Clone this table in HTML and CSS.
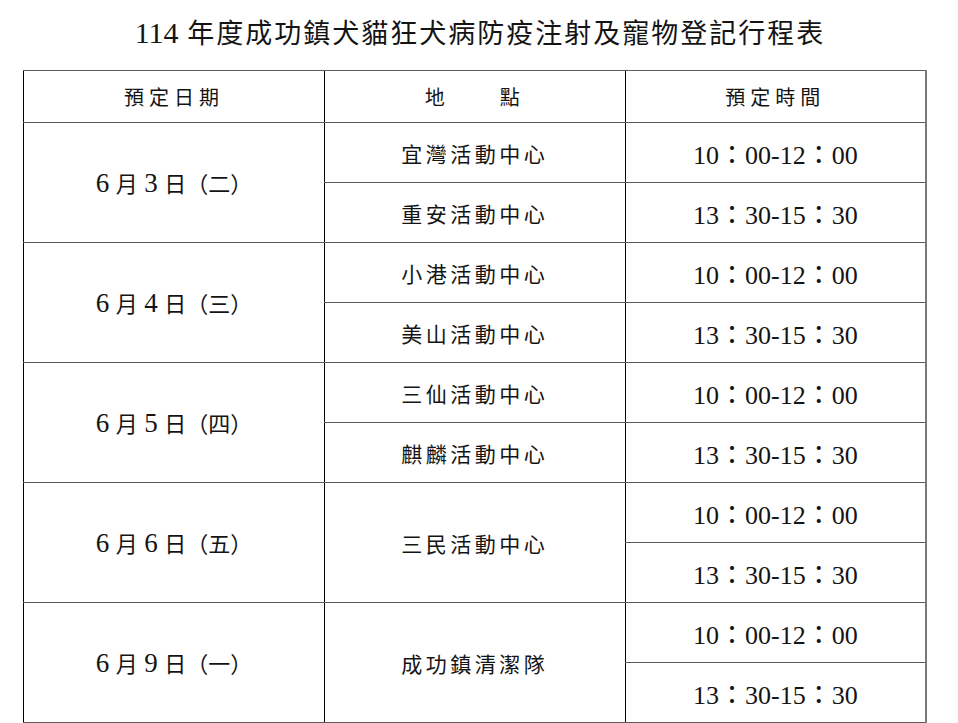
FILE: index.html
```html
<!DOCTYPE html>
<html lang="zh-Hant">
<head>
<meta charset="utf-8">
<title>114 年度成功鎮犬貓狂犬病防疫注射及寵物登記行程表</title>
<link rel="stylesheet" href="styles.css">
</head>
<body>
<h1 class="title"><span class="title-num">114</span> 年度成功鎮犬貓狂犬病防疫注射及寵物登記行程表</h1>
<table class="schedule">
  <thead>
    <tr>
      <th class="head">預定日期</th>
      <th class="head">地　　點</th>
      <th class="head">預定時間</th>
    </tr>
  </thead>
  <tbody>
    <tr>
      <td class="date" rowspan="2"><span class="n">6</span> 月 <span class="n">3</span> 日（二）</td>
      <td class="place">宜灣活動中心</td>
      <td class="time">10：00-12：00</td>
    </tr>
    <tr>
      <td class="place">重安活動中心</td>
      <td class="time">13：30-15：30</td>
    </tr>
    <tr>
      <td class="date" rowspan="2"><span class="n">6</span> 月 <span class="n">4</span> 日（三）</td>
      <td class="place">小港活動中心</td>
      <td class="time">10：00-12：00</td>
    </tr>
    <tr>
      <td class="place">美山活動中心</td>
      <td class="time">13：30-15：30</td>
    </tr>
    <tr>
      <td class="date" rowspan="2"><span class="n">6</span> 月 <span class="n">5</span> 日（四）</td>
      <td class="place">三仙活動中心</td>
      <td class="time">10：00-12：00</td>
    </tr>
    <tr>
      <td class="place">麒麟活動中心</td>
      <td class="time">13：30-15：30</td>
    </tr>
    <tr>
      <td class="date" rowspan="2"><span class="n">6</span> 月 <span class="n">6</span> 日（五）</td>
      <td class="place" rowspan="2">三民活動中心</td>
      <td class="time">10：00-12：00</td>
    </tr>
    <tr>
      <td class="time">13：30-15：30</td>
    </tr>
    <tr>
      <td class="date" rowspan="2"><span class="n">6</span> 月 <span class="n">9</span> 日（一）</td>
      <td class="place" rowspan="2">成功鎮清潔隊</td>
      <td class="time">10：00-12：00</td>
    </tr>
    <tr>
      <td class="time">13：30-15：30</td>
    </tr>
  </tbody>
</table>
</body>
</html>
```
FILE: styles.css
```css
html, body {
  margin: 0;
  padding: 0;
  background: #ffffff;
}

body {
  font-family: "Liberation Serif", "Noto Sans CJK TC", serif;
  color: #141414;
}

.title {
  margin: 0;
  padding-top: 14px;
  height: 38px;
  line-height: 38px;
  margin-bottom: 18px;
  text-align: center;
  font-weight: normal;
  font-size: 27px;
  letter-spacing: 2px;
  padding-left: 2px;
}

.title-num {
  font-size: 30px;
  letter-spacing: 0;
}

.schedule {
  margin-left: 23px;
  width: 904px;
  border-collapse: collapse;
  table-layout: fixed;
  border-top: 1px solid #000;
  border-left: 1px solid #000;
  border-right: 2px solid #7a7a7a;
}

.schedule th,
.schedule td {
  padding: 0;
  text-align: center;
  vertical-align: middle;
  border-left: 1px solid #000;
  border-top: 1px solid #5c5c5c;
  border-bottom: 1px solid #5c5c5c;
  font-weight: normal;
}

.head {
  height: 51px;
  font-size: 20px;
  letter-spacing: 5px;
  padding-left: 5px;
}

.schedule td {
  height: 59px;
}

.date {
  font-size: 22px;
  word-spacing: 1px;
  padding-left: 21px;
}

.date .n {
  font-size: 27px;
}

.place {
  font-size: 21px;
  letter-spacing: 3.5px;
  padding-left: 3px;
}

.time {
  font-size: 26px;
}
```
